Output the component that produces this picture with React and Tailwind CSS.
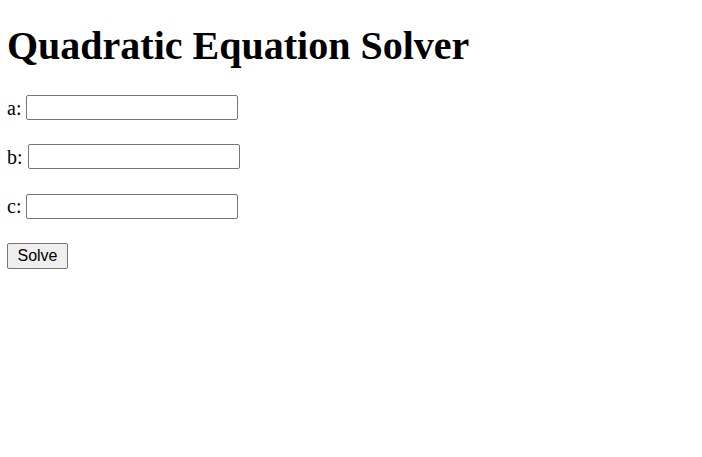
import React from "react";

const fields = [
  { id: "a", label: "a:" },
  { id: "b", label: "b:" },
  { id: "c", label: "c:" },
];

export default function App() {
  return (
    <div className="min-h-[457px] bg-white px-[7px] text-black font-['Liberation_Serif',serif]">
      <h1 className="pt-[24px] text-[40px] leading-[44px] font-bold">Quadratic Equation Solver</h1>

      <div className="mt-[27px] flex flex-col gap-[24.3px]">
        {fields.map((f) => (
          <div key={f.id} className="flex h-[25px] items-center gap-[5px]">
            <label htmlFor={f.id} className="text-[20px] leading-[22px]">
              {f.label}
            </label>
            <input
              id={f.id}
              type="text"
              className="h-[25px] w-[212px] rounded-[2px] border border-[#767676] bg-white px-[2px] text-[16px] font-['Liberation_Sans',sans-serif] outline-none"
            />
          </div>
        ))}
        <div>
          <button className="h-[26px] w-[61px] rounded-[2px] border border-[#767676] bg-[#efefef] text-[16px] leading-[20px] font-['Liberation_Sans',sans-serif]">
            Solve
          </button>
        </div>
      </div>
    </div>
  );
}
